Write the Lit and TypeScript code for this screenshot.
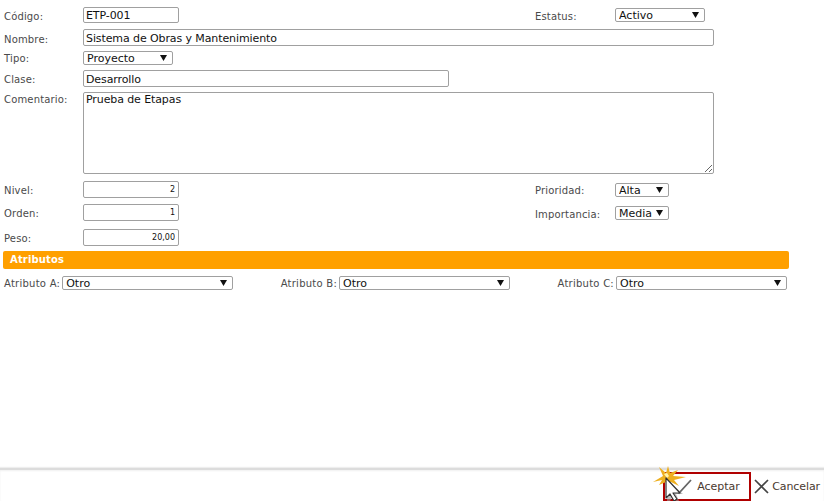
import { LitElement, html, css } from "lit";
import { customElement } from "lit/decorators.js";

const arrow = html`<svg class="arrow" width="7" height="6" viewBox="0 0 7 6"><path d="M0 0h7L3.5 6z" fill="#111"/></svg>`;

function sel(value: string, cls: string) {
  return html`<span class="sel ${cls}"><select><option>${value}</option></select>${arrow}</span>`;
}

@customElement("app-root")
export class AppRoot extends LitElement {
  static styles = css`
    :host { display: flex; flex-direction: column; width: 824px; height: 501px; background: #fff; overflow: hidden;
      font-family: "DejaVu Sans", Verdana, sans-serif; font-size: 10px; color: #4a4a4a; }
    * { box-sizing: border-box; }
    .form { flex: 1; display: flex; flex-direction: column; padding: 7px 0 0 4px; }
    .row { display: flex; align-items: flex-start; }
    label { display: block; white-space: nowrap; letter-spacing: 0.16px; }
    .lab { width: 79px; flex: none; }
    .r1 { height: 22px; }
    .r2 { height: 22px; }
    .r3 { height: 19px; }
    .r4 { height: 22px; }
    .r5 { height: 89px; }
    .r6 { height: 23px; }
    .r7 { height: 25px; }
    .r8 { height: 22px; }
    .p2 { padding-top: 2px; }
    .p4 { padding-top: 4px; }
    .p5 { padding-top: 5px; }
    input, textarea, select { font-family: inherit; font-size: 11px; color: #111; border: 1px solid #a0a0a0; border-radius: 2px;
      background: #fff; outline: none; margin: 0; letter-spacing: -0.1px; }
    input { height: 16px; padding: 0 2px; display: block; }
    .w96 { width: 96px; }
    .w631 { width: 631px; height: 17px; padding-top: 1px; }
    .w366 { width: 366px; height: 17px; padding-top: 1px; }
    .num { text-align: right; font-size: 8px; width: 96px; height: 17px; padding-right: 3px; letter-spacing: 0; }
    textarea { width: 631px; height: 82px; padding: 0 2px; resize: vertical; display: block; }
    .sel { position: relative; display: block; flex: none; }
    select { appearance: none; -webkit-appearance: none; width: 100%; height: 14px; padding: 0 0 0 3px; display: block; line-height: 13px; letter-spacing: 0; }
    .arrow { position: absolute; right: 6px; top: 4px; }
    .s90 { width: 90px; }
    .s54 { width: 54px; }
    .down1 { margin-top: 1px; }
    .down2 { margin-top: 2px; }
    .spacer { width: 356px; flex: none; }
    .lab2 { width: 80px; flex: none; }
    .bar { width: 786px; margin-left: -1px; height: 18px; background: #ffa000; border-radius: 2px; color: #fff;
      font-weight: bold; font-size: 10px; line-height: 18px; padding-left: 7px; letter-spacing: 0.15px; }
    .attrs { display: flex; margin-top: 7px; width: 783px; justify-content: space-between; }
    .attr { display: flex; align-items: center; gap: 2px; }
    .attr label { letter-spacing: 0.25px; }
    .attr .sel { width: 171px; }
    footer { height: 33px; flex: none; border-top: 2px solid #dcdcdc; display: flex; justify-content: flex-end; align-items: flex-start; box-shadow: 0 -1px 1px #eee, inset 0 1px 2px #f0f0f0; }
    .btn { display: flex; align-items: center; color: #4a3a30; font-size: 11px; height: 29px; position: relative; }
    .ok { width: 88px; border: 2px solid #b00000; margin-top: 2px; padding-left: 32px; letter-spacing: -0.05px; }
    .no { padding: 0 4px 0 3px; gap: 3px; margin-top: 1px; height: 30px; letter-spacing: -0.1px; }
    .cursor { position: absolute; left: -12px; top: -9px; }
  `;

  render() {
    return html`
      <div class="form">
        <div class="row r1">
          <label class="lab p4">Código:</label>
          <input class="w96" .value=${"ETP-001"} />
          <span class="spacer"></span>
          <label class="lab2 p4">Estatus:</label>
          ${sel("Activo", "s90 down1")}
        </div>
        <div class="row r2"><label class="lab p5">Nombre:</label><input class="w631" .value=${"Sistema de Obras y Mantenimiento"} /></div>
        <div class="row r3"><label class="lab p2">Tipo:</label>${sel("Proyecto", "s90")}</div>
        <div class="row r4"><label class="lab p4">Clase:</label><input class="w366" .value=${"Desarrollo"} /></div>
        <div class="row r5"><label class="lab p2">Comentario:</label><textarea .value=${"Prueba de Etapas"}></textarea></div>
        <div class="row r6">
          <label class="lab p4">Nivel:</label><input class="num" .value=${"2"} />
          <span class="spacer"></span><label class="lab2 p4">Prioridad:</label>${sel("Alta", "s54 down2")}
        </div>
        <div class="row r7">
          <label class="lab p4">Orden:</label><input class="num" .value=${"1"} />
          <span class="spacer"></span><label class="lab2 p5">Importancia:</label>${sel("Media", "s54 down2")}
        </div>
        <div class="row r8"><label class="lab p4">Peso:</label><input class="num" .value=${"20,00"} /></div>
        <div class="bar">Atributos</div>
        <div class="attrs">
          <div class="attr"><label>Atributo A:</label>${sel("Otro", "")}</div>
          <div class="attr"><label>Atributo B:</label>${sel("Otro", "")}</div>
          <div class="attr"><label>Atributo C:</label>${sel("Otro", "")}</div>
        </div>
      </div>
      <footer>
        <div class="btn ok">
          Aceptar
          <svg class="cursor" width="40" height="36" viewBox="0 0 40 36">
            <path d="M22 25l4 3L38 15" fill="none" stroke="#666" stroke-width="1.8"/>
            <path d="M0 17l10-6L6 2l7 6 2-7 2 7 8-3-5 6 13 1-12 3 5 6-8-4-2 7-3-7-7 3 3-5z" fill="#eeb020"/>
            <path d="M11 9l3-1 2 3-2 2z" fill="#fff3b0"/>
            <path d="M14 15v21h3l3-5 3 5h3l-3-7h7z" fill="#999" opacity=".6"/>
            <path d="M13 13v20l4-4 4 7 3-2-4-6h7z" fill="#fff" stroke="#333" stroke-width="1.2" stroke-linejoin="round"/>
          </svg>
        </div>
        <div class="btn no">
          <svg width="15" height="15" viewBox="0 0 15 15"><path d="M1 1l13 13M14 1L1 14" stroke="#444" stroke-width="1.7"/></svg>
          Cancelar
        </div>
      </footer>
    `;
  }
}
